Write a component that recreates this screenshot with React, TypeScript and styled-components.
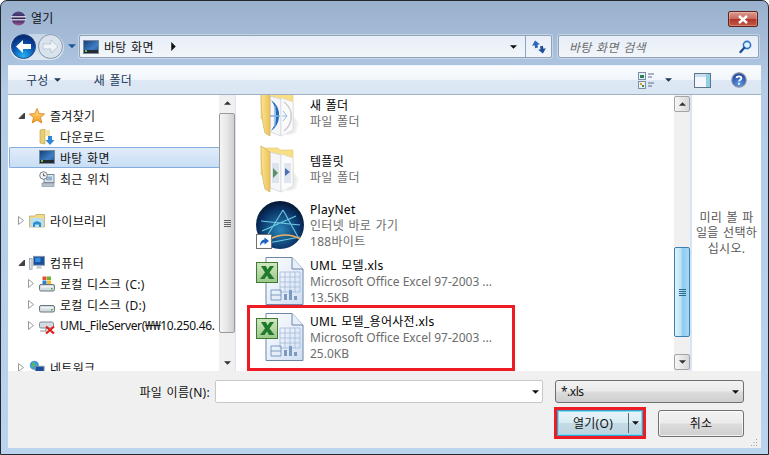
import React from "react";
import styled, { createGlobalStyle } from "styled-components";

const GlobalStyle = createGlobalStyle`
  html, body {
    margin: 0;
    padding: 0;
    background: #fff;
  }
  body {
    font-family: "Noto Sans", "Noto Sans CJK KR", sans-serif;
    font-size: 12px;
    letter-spacing: 0.3px;
    word-spacing: 1px;
    color: #000;
  }
  * {
    box-sizing: border-box;
  }
`;

const Frame = styled.div`
  width: 769px;
  height: 455px;
  border: 1px solid #23282e;
  border-radius: 7px 7px 0 0;
  padding: 0 7px 6px;
  display: flex;
  flex-direction: column;
  overflow: hidden;
  background: linear-gradient(180deg, #99b1cd 0%, #b4cce6 20%, #bad4ee 100%);
`;

const TitleBar = styled.div`
  height: 34px;
  flex: none;
  display: flex;
  align-items: center;
  padding: 0 2px 0 3px;
  gap: 5px;
`;

const TitleText = styled.span`
  flex: 1;
  font-size: 12px;
  color: #111;
`;

const CloseButton = styled.div`
  width: 30px;
  height: 16px;
  margin-right: 1px;
  margin-top: 2px;
  border: 1px solid #5f2420;
  border-radius: 2px;
  display: flex;
  align-items: center;
  justify-content: center;
  background: linear-gradient(180deg, #dc9a90 0%, #c9695c 48%, #b0352a 52%, #c25b48 100%);
  box-shadow: inset 0 0 0 1px rgba(255, 255, 255, 0.25);
`;

const AddressRow = styled.div`
  height: 23px;
  flex: none;
  display: flex;
  align-items: center;
  padding: 0 1px 0 2px;
  margin-bottom: 7px;
`;

const NavCapsule = styled.div`
  width: 54px;
  height: 26px;
  flex: none;
  border-radius: 13px;
  display: flex;
  align-items: center;
  justify-content: space-between;
  padding: 0 1px;
  background: linear-gradient(180deg, #c4d5e7, #dde8f3);
`;

const HistoryArrow = styled.div`
  width: 15px;
  flex: none;
  display: flex;
  justify-content: center;
`;

const AddressBox = styled.div`
  width: 473px;
  height: 23px;
  flex: none;
  display: flex;
  align-items: center;
  border: 1px solid #8fa3b9;
  border-radius: 2px;
  background: linear-gradient(180deg, #e7eef7, #f2f6fb);
  box-shadow: 0 0 0 1px rgba(255, 255, 255, 0.35);
`;

const AddressPath = styled.div`
  flex: 1;
  display: flex;
  align-items: center;
  padding-left: 3px;
  gap: 5px;
`;

const Crumb = styled.span`
  color: #111;
  margin-right: 12px;
`;

const AddressDrop = styled.div`
  width: 24px;
  display: flex;
  justify-content: center;
  margin-right: 0;
`;

const RefreshCell = styled.div`
  width: 26px;
  height: 100%;
  border-left: 1px solid #8fa3b9;
  display: flex;
  align-items: center;
  justify-content: center;
`;

const SearchBox = styled.div`
  width: 201px;
  height: 23px;
  margin-left: 6px;
  flex: none;
  display: flex;
  align-items: center;
  justify-content: space-between;
  padding: 0 6px 0 10px;
  border: 1px solid #8fa3b9;
  border-radius: 2px;
  background: linear-gradient(180deg, #e7eef7, #f2f6fb);
  box-shadow: 0 0 0 1px rgba(255, 255, 255, 0.35);
`;

const SearchHint = styled.span`
  font-style: italic;
  color: #6d6d6d;
`;

const Toolbar = styled.div`
  height: 30px;
  flex: none;
  display: flex;
  align-items: center;
  padding: 0 14px 0 18px;
  color: #1e395b;
  border-top: 1px solid #eef4fb;
  border-bottom: 1px solid #a0afc3;
  background: linear-gradient(180deg, #fbfdfe 0%, #f1f6fb 48%, #dde8f4 52%, #dbe6f3 100%);
`;

const ToolLabel = styled.span<{ $gap: number }>`
  margin-right: ${(p) => p.$gap}px;
`;

const ToolArrow = styled.div<{ $gap: number }>`
  display: flex;
  margin-right: ${(p) => p.$gap}px;
`;

const ToolSpring = styled.div`
  flex: 1;
`;

const ToolIcon = styled.div<{ $gap: number }>`
  display: flex;
  margin-right: ${(p) => p.$gap}px;
`;

const Content = styled.div`
  height: 276px;
  flex: none;
  display: flex;
  background: #fff;
  overflow: hidden;
`;

const NavPane = styled.div`
  width: 228px;
  flex: none;
  display: flex;
  border-right: 1px solid #d6e5f5;
`;

const NavList = styled.div`
  flex: 1;
  min-width: 0;
  padding: 10px 0 0 1px;
  overflow: hidden;
`;

const NavRow = styled.div<{ $selected?: boolean }>`
  height: 21px;
  display: flex;
  align-items: center;
  position: relative;
  white-space: nowrap;
  overflow: hidden;
  border: 1px solid ${(p) => (p.$selected ? "#84acdd" : "transparent")};
  border-right: none;
  border-radius: 2px 0 0 2px;
  background: ${(p) =>
    p.$selected ? "linear-gradient(180deg, #e0ecfa, #c9def5)" : "transparent"};
`;

const Expander = styled.div<{ $level: number }>`
  width: 9px;
  height: 9px;
  flex: none;
  display: flex;
  margin-left: ${(p) => (p.$level === 0 ? 7 : 17)}px;
  margin-right: 3px;
`;

const NavIcon = styled.div`
  width: 16px;
  height: 16px;
  flex: none;
  display: flex;
  margin-right: 5px;
`;

const NavText = styled.span<{ $tight?: boolean }>`
  color: #111;
  letter-spacing: ${(p) => (p.$tight ? "-0.35px" : "inherit")};
`;

const ScrollBar = styled.div<{ $pad: number }>`
  width: 16px;
  flex: none;
  display: flex;
  flex-direction: column;
  padding: ${(p) => p.$pad}px 0 ${(p) => p.$pad}px;
  background: #f0f0f0;
`;

const ScrollButton = styled.div<{ $plain?: boolean }>`
  height: 16px;
  flex: none;
  display: flex;
  align-items: center;
  justify-content: center;
  border: ${(p) => (p.$plain ? "none" : "1px solid #a4a4a4")};
  border-radius: 2px;
  background: ${(p) => (p.$plain ? "transparent" : "linear-gradient(90deg, #f6f6f6, #d8d8d8)")};
`;

const ScrollTrack = styled.div`
  flex: 1;
  position: relative;
`;

const ScrollThumb = styled.div<{ $top: number; $size: number; $active?: boolean }>`
  margin-top: ${(p) => p.$top}px;
  height: ${(p) => p.$size}px;
  display: flex;
  flex-direction: column;
  align-items: center;
  justify-content: center;
  gap: 1px;
  border: 1px solid ${(p) => (p.$active ? "#3c7fb1" : "#9a9a9a")};
  border-radius: 2px;
  background: ${(p) =>
    p.$active
      ? "linear-gradient(90deg, #e3f4fc 0%, #b6e0f6 45%, #8ccbef 55%, #a8d9f2 100%)"
      : "linear-gradient(90deg, #f5f5f5 0%, #e6e6e6 50%, #cfcfcf 100%)"};
`;

const GripLine = styled.div<{ $active?: boolean }>`
  width: 7px;
  height: 1px;
  background: ${(p) => (p.$active ? "#2c6a94" : "#666")};
`;

const FilePane = styled.div`
  flex: 1;
  min-width: 0;
  overflow: hidden;
  padding-left: 16px;
`;

const FileRow = styled.div<{ $marked?: boolean; $first?: boolean }>`
  width: 260px;
  height: 56px;
  margin-top: ${(p) => (p.$first ? -10 : 0)}px;
  padding-left: 4px;
  display: flex;
  align-items: center;
  gap: 6px;
  position: relative;
  &::after {
    content: "";
    display: ${(p) => (p.$marked ? "block" : "none")};
    position: absolute;
    left: -5px;
    right: -3px;
    top: -4px;
    bottom: -6px;
    border: 3px solid #ed1c24;
  }
`;

const FileIcon = styled.div`
  width: 48px;
  height: 48px;
  flex: none;
  display: flex;
`;

const FileText = styled.div`
  display: flex;
  flex-direction: column;
  white-space: nowrap;
  min-width: 0;
`;

const FileName = styled.div`
  line-height: 17px;
  color: #000;
`;

const FileDetail = styled.div<{ $latin?: boolean }>`
  line-height: 16px;
  color: #6d6d6d;
  letter-spacing: ${(p) => (p.$latin ? "0" : "inherit")};
  word-spacing: ${(p) => (p.$latin ? "0" : "inherit")};
`;

const PreviewPane = styled.div`
  width: 71px;
  flex: none;
  display: flex;
  align-items: center;
  justify-content: center;
  text-align: center;
  line-height: 15.5px;
  color: #575757;
  border-left: 2px solid #d6e5f5;
`;

const BottomPanel = styled.div`
  flex: 1;
  display: flex;
  flex-direction: column;
  padding: 9px 17px 0 0;
  background: #f0f0f0;
  position: relative;
`;

const NameRow = styled.div`
  height: 23px;
  display: flex;
  align-items: center;
  justify-content: flex-end;
`;

const NameLabel = styled.span`
  margin-right: 5px;
  color: #111;
`;

const NameInput = styled.div`
  width: 328px;
  height: 23px;
  display: flex;
  align-items: center;
  justify-content: flex-end;
  padding-right: 3px;
  margin-right: 12px;
  border: 1px solid #c8c8c8;
  border-radius: 2px;
  background: #fff;
`;

const FilterCombo = styled.div`
  width: 189px;
  height: 23px;
  display: flex;
  align-items: center;
  justify-content: space-between;
  padding: 0 4px 0 5px;
  border: 1px solid #707070;
  border-radius: 3px;
  background: linear-gradient(180deg, #f2f2f2 0%, #ebebeb 48%, #dcdcdc 52%, #cfcfcf 100%);
`;

const FilterText = styled.span`
  letter-spacing: -0.5px;
  color: #111;
`;

const ButtonRow = styled.div`
  display: flex;
  align-items: center;
  justify-content: flex-end;
  margin-top: 4px;
`;

const RedMark = styled.div`
  width: 92px;
  height: 32px;
  margin-right: 12px;
  border: 3px solid #ed1c24;
`;

const PrimaryButton = styled.div`
  height: 100%;
  display: flex;
  align-items: stretch;
  border: 1px solid #3ba0cc;
  background: linear-gradient(180deg, #e8f4f9 0%, #d9ecf4 48%, #c4dbe6 52%, #bdd3de 100%);
  box-shadow: inset 0 0 0 1px #7fdcef;
`;

const PrimaryLabel = styled.div`
  flex: 1;
  display: flex;
  align-items: center;
  justify-content: center;
  color: #111;
`;

const SplitArrow = styled.div`
  width: 14px;
  display: flex;
  align-items: center;
  justify-content: center;
  border-left: 1px solid #5a6a72;
  margin: 2px 0;
`;

const CancelButton = styled.div`
  width: 86px;
  height: 27px;
  display: flex;
  align-items: center;
  justify-content: center;
  border: 1px solid #707070;
  border-radius: 3px;
  color: #111;
  background: linear-gradient(180deg, #f2f2f2 0%, #ebebeb 48%, #dcdcdc 52%, #cfcfcf 100%);
  box-shadow: inset 0 0 0 1px rgba(255, 255, 255, 0.7);
`;

const ResizeGrip = styled.svg`
  position: absolute;
  right: 3px;
  bottom: 1px;
`;

/* small drawings */

const Caret = ({ dir = "down", size = 7, color = "#111" }: { dir?: "down" | "up" | "right"; size?: number; color?: string }) => {
  const pts =
    dir === "down" ? "0,0 8,0 4,4" : dir === "up" ? "0,4 8,4 4,0" : "0,0 4,4 0,8";
  const box = dir === "right" ? "0 0 4 8" : "0 0 8 4";
  return (
    <svg width={dir === "right" ? size / 2 + 1 : size} height={dir === "right" ? size + 1 : size / 2 + 0.5} viewBox={box}>
      <polygon points={pts} fill={color} />
    </svg>
  );
};

const OpenTri = () => (
  <svg width="9" height="9" viewBox="0 0 9 9">
    <polygon points="1.5,0.5 6.5,4.5 1.5,8.5" fill="#fff" stroke="#9a9a9a" />
  </svg>
);

const ExpandedTri = () => (
  <svg width="9" height="9" viewBox="0 0 9 9">
    <polygon points="7.5,2 7.5,7.5 2,7.5" fill="#404040" stroke="#404040" />
  </svg>
);

const EclipseLogo = () => (
  <svg width="15" height="15" viewBox="0 0 15 15">
    <defs>
      <linearGradient id="ecl" x1="0" y1="0" x2="0" y2="1">
        <stop offset="0" stopColor="#5a4a86" />
        <stop offset="0.55" stopColor="#2c2255" />
        <stop offset="1" stopColor="#a05a9a" />
      </linearGradient>
    </defs>
    <circle cx="7.5" cy="7.5" r="7" fill="url(#ecl)" />
    <rect x="0" y="5.2" width="15" height="1.2" fill="#f2eef6" />
    <rect x="0" y="8.2" width="15" height="1.2" fill="#f2eef6" />
  </svg>
);

const BackButton = () => (
  <svg width="25" height="25" viewBox="0 0 25 25">
    <defs>
      <radialGradient id="bk" cx="0.5" cy="0.9" r="0.8">
        <stop offset="0" stopColor="#28b4f0" />
        <stop offset="0.55" stopColor="#0a5bb8" />
        <stop offset="1" stopColor="#062c78" />
      </radialGradient>
    </defs>
    <circle cx="12.5" cy="12.5" r="12" fill="url(#bk)" stroke="#2b4d80" />
    <path d="M5 12.5 L12 6 V10 H20 V15 H12 V19 Z" fill="#fff" />
  </svg>
);

const ForwardButton = () => (
  <svg width="25" height="25" viewBox="0 0 25 25">
    <circle cx="12.5" cy="12.5" r="12" fill="#d9e3ed" stroke="#8a97a6" />
    <path d="M20 12.5 L13 6 V10 H5 V15 H13 V19 Z" fill="#eef3f8" stroke="#a8b5c2" strokeWidth="0.6" />
  </svg>
);

const DesktopIcon = ({ w = 16 }: { w?: number }) => (
  <svg width={w} height="14" viewBox="0 0 16 14">
    <defs>
      <linearGradient id="dsk" x1="0" y1="0" x2="1" y2="1">
        <stop offset="0" stopColor="#0f3d78" />
        <stop offset="0.6" stopColor="#3f7fc4" />
        <stop offset="1" stopColor="#1c4e90" />
      </linearGradient>
    </defs>
    <rect x="0.5" y="0.5" width="15" height="13" fill="url(#dsk)" stroke="#7d8a99" />
    <rect x="1" y="10" width="14" height="3" fill="#222a33" />
    <rect x="2" y="10" width="2" height="2" fill="#6cc24a" />
  </svg>
);

const RefreshIcon = () => (
  <svg width="16" height="16" viewBox="0 0 16 16">
    <path d="M1 6 L5 1.5 L9 6 H6.5 V9 H3.5 V6 Z" fill="#2b66b8" transform="rotate(-12 5 6)" />
    <path d="M7 10 L11 14.5 L15 10 H12.5 V7 H9.5 V10 Z" fill="#1f4f99" transform="rotate(-12 11 10)" />
  </svg>
);

const MagnifierIcon = () => (
  <svg width="13" height="14" viewBox="0 0 13 14">
    <circle cx="8" cy="5" r="3.6" fill="#dff0fb" stroke="#2d75c4" strokeWidth="1.6" />
    <path d="M5.3 7.8 L1.5 12" stroke="#1b4f96" strokeWidth="2.4" strokeLinecap="round" />
  </svg>
);

const ViewsIcon = () => (
  <svg width="17" height="17" viewBox="0 0 17 17">
    <rect x="0.5" y="0.5" width="7" height="7" fill="#e6f1fa" stroke="#7a8ea6" />
    <rect x="2" y="3" width="4" height="3" fill="#2f7f56" />
    <rect x="0.5" y="9.5" width="7" height="7" fill="#e6f1fa" stroke="#7a8ea6" />
    <rect x="2" y="11" width="2" height="2" fill="#d8a420" />
    <rect x="4" y="13" width="2" height="2" fill="#3b8f3b" />
    <path d="M10 2 H16 M10 5 H14 M10 11 H16 M10 14 H14" stroke="#5a6f88" />
  </svg>
);

const PaneIcon = () => (
  <svg width="17" height="15" viewBox="0 0 17 15">
    <rect x="0.5" y="0.5" width="16" height="14" fill="#f4f8fc" stroke="#5f7590" />
    <rect x="1" y="1" width="15" height="3" fill="#c9dff0" />
    <rect x="12" y="1" width="4" height="13" fill="#8fd0e4" />
  </svg>
);

const HelpIcon = () => (
  <svg width="16" height="16" viewBox="0 0 16 16">
    <defs>
      <radialGradient id="hlp" cx="0.5" cy="0.8" r="0.8">
        <stop offset="0" stopColor="#5b9bea" />
        <stop offset="1" stopColor="#1b3f98" />
      </radialGradient>
    </defs>
    <circle cx="8" cy="8" r="7.2" fill="url(#hlp)" stroke="#8b93a0" strokeWidth="1.2" />
    <path d="M5.6 6 C5.8 3.8 10.4 3.8 10.4 6.2 C10.4 7.8 8 7.6 8 9.6" fill="none" stroke="#fff" strokeWidth="1.7" />
    <rect x="7.1" y="10.8" width="1.8" height="1.8" fill="#fff" />
  </svg>
);

const StarIcon = () => (
  <svg width="16" height="16" viewBox="0 0 16 16">
    <defs>
      <linearGradient id="star" x1="0" y1="0" x2="0" y2="1">
        <stop offset="0" stopColor="#ffe38a" />
        <stop offset="1" stopColor="#f59a1c" />
      </linearGradient>
    </defs>
    <polygon points="8,0.5 10.2,5.6 15.6,6 11.5,9.6 12.8,15 8,12.1 3.2,15 4.5,9.6 0.4,6 5.8,5.6" fill="url(#star)" stroke="#d9791a" strokeWidth="0.8" />
  </svg>
);

const DownloadIcon = () => (
  <svg width="16" height="16" viewBox="0 0 16 16">
    <path d="M1 1 L6 0 V15 L1 14 Z" fill="#e9cd72" stroke="#b89a4a" strokeWidth="0.6" />
    <path d="M6 1 H11 V7 H6 Z" fill="#f3e2a6" />
    <path d="M9 7 H13 V11 H15.5 L11 16 L6.5 11 H9 Z" fill="#2c86d8" />
  </svg>
);

const RecentIcon = () => (
  <svg width="16" height="16" viewBox="0 0 16 16">
    <rect x="5" y="3.5" width="10" height="8" fill="#dce6ef" stroke="#7c8894" />
    <rect x="7" y="5.5" width="6" height="4" fill="#8fb3cf" />
    <rect x="3" y="12" width="12" height="3.5" fill="#b9c2cb" stroke="#7c8894" strokeWidth="0.6" />
    <circle cx="4.5" cy="4.5" r="3.8" fill="#f0f0f0" stroke="#77818b" />
    <path d="M4.5 2.5 V4.7 H6.3" fill="none" stroke="#333" strokeWidth="0.8" />
  </svg>
);

const LibraryIcon = () => (
  <svg width="16" height="16" viewBox="0 0 16 16">
    <path d="M0.5 3 H6 L7 1.5 H15.5 V14 H0.5 Z" fill="#f1d98a" stroke="#bda258" strokeWidth="0.7" />
    <rect x="1.5" y="5" width="13" height="9" fill="#b8dff2" />
    <path d="M4 14 V10 Q8 6.5 12 10 V14 H10 V11.5 H6 V14 Z" fill="#2f8fce" />
  </svg>
);

const ComputerIcon = () => (
  <svg width="18" height="16" viewBox="0 0 18 16">
    <rect x="0.5" y="3" width="3" height="12" fill="#d9dee3" stroke="#808b95" strokeWidth="0.7" />
    <rect x="5" y="0.5" width="12.5" height="10" fill="#1b4f9c" stroke="#8a96a2" />
    <rect x="7" y="2" width="6" height="5" fill="#2f8fe0" />
    <path d="M9 11 H13.5 L14.5 14.5 H8 Z" fill="#c5ccd3" />
  </svg>
);

const DiskIcon = ({ flag }: { flag?: boolean }) => (
  <svg width="16" height="16" viewBox="0 0 16 16">
    <rect x="0.5" y="8.5" width="15" height="6.5" rx="1.5" fill="#d4dce2" stroke="#69747e" />
    <rect x="2" y="10" width="12" height="1.6" fill="#eef2f5" />
    <rect x="12" y="12" width="1.6" height="1.6" fill="#42b742" />
    {flag && (
      <g>
        <rect x="3.5" y="0.5" width="4" height="3.5" fill="#e2512a" />
        <rect x="8" y="0.5" width="4" height="3.5" fill="#6bb52f" />
        <rect x="3.5" y="4.5" width="4" height="3.5" fill="#2b7cd3" />
        <rect x="8" y="4.5" width="4" height="3.5" fill="#f5bd1e" />
      </g>
    )}
  </svg>
);

const DriveOfflineIcon = () => (
  <svg width="16" height="16" viewBox="0 0 16 16">
    <rect x="0.5" y="4" width="14" height="6" rx="1.5" fill="#d4dce2" stroke="#808b95" />
    <path d="M7 10 V13 H1" fill="none" stroke="#8a949d" strokeWidth="1.2" />
    <path d="M7 8.5 L15 15.5 M15 8.5 L7 15.5" stroke="#e0201a" strokeWidth="2.2" />
  </svg>
);

const NetworkIcon = () => (
  <svg width="18" height="16" viewBox="0 0 18 16">
    <circle cx="6" cy="5" r="4.6" fill="#3aa0dc" stroke="#2a6f9e" strokeWidth="0.6" />
    <path d="M3 3 L6 2 L7 5 L4 7 Z" fill="#63bb45" />
    <rect x="7" y="6" width="10" height="8" fill="#1b4f9c" stroke="#8a96a2" />
  </svg>
);

const FolderIcon = ({ accent }: { accent: boolean }) => (
  <svg width="48" height="48" viewBox="0 0 48 48">
    <defs>
      <linearGradient id="fldFlap" x1="0" y1="0" x2="1" y2="0">
        <stop offset="0" stopColor="#fae58f" />
        <stop offset="1" stopColor="#eec25a" />
      </linearGradient>
      <radialGradient id="fldShade" cx="0.3" cy="0.5" r="0.7">
        <stop offset="0" stopColor="#d8d8da" />
        <stop offset="1" stopColor="#ffffff" />
      </radialGradient>
    </defs>
    <path d="M34 24 L44 34 L40 44 L30 47 Z" fill="url(#fldShade)" />
    <path d="M5 1 L8 3 H22 L24 5 H37 V30 H5 Z" fill="#f8df86" stroke="#e2c878" strokeWidth="0.6" />
    <path d="M14 7 L25 10 V47 L14 43 Z" fill="#f4f6f9" stroke="#ccd0d6" strokeWidth="0.7" />
    <path d="M25 9 L37 13 V41 L25 47 Z" fill="#fbfbfc" stroke="#d5d8dc" strokeWidth="0.7" />
    {accent ? (
      <g>
        <path d="M15 11 A18 18 0 0 1 23 28 A18 18 0 0 1 15 42 A26 26 0 0 0 15 11 Z" fill="#2269b8" />
        <path d="M14 27 H24 M19 17 V38" stroke="#7fb3e0" strokeWidth="1.4" />
        <path d="M28 13 A18 18 0 0 1 35 30 A18 18 0 0 1 28 42" fill="none" stroke="#c9ccd2" strokeWidth="1.5" />
        <path d="M26 27 H31 M27 22 L31 27 L27 32" fill="none" stroke="#8fb8dc" strokeWidth="1" />
      </g>
    ) : (
      <g>
        <rect x="16" y="18" width="7" height="20" fill="#dde3ec" />
        <path d="M17 23 L22 28 L17 33 Z" fill="#5f8f66" />
        <rect x="28" y="18" width="7" height="20" fill="#e0e6f0" />
        <path d="M29 23 L34 27 L29 31 Z" fill="#4a6fb0" />
      </g>
    )}
    <path d="M5 1 L14 7 V47 L9 44 Q5 30 5 1 Z" fill="url(#fldFlap)" stroke="#cdb36a" strokeWidth="0.7" />
  </svg>
);

const PlayNetIcon = () => (
  <svg width="48" height="48" viewBox="0 0 48 48">
    <defs>
      <radialGradient id="pn" cx="0.5" cy="0.6" r="0.6">
        <stop offset="0" stopColor="#2a86b8" />
        <stop offset="0.7" stopColor="#0a3468" />
        <stop offset="1" stopColor="#05152e" />
      </radialGradient>
    </defs>
    <circle cx="24" cy="24" r="24" fill="url(#pn)" />
    <path d="M5 20 L44 24 M27 9 L8 40 M27 9 L42 36 M6 30 L40 15 M12 42 L44 36" stroke="#7fe0f5" strokeWidth="1.1" fill="none" opacity="0.85" />
    <path d="M14 38 Q30 30 44 38" stroke="#f0b060" strokeWidth="1.4" fill="none" />
    <rect x="0.5" y="33.5" width="15" height="14" fill="#fff" stroke="#707070" />
    <path d="M4 45 Q4 39 8.500 38.500 V36.500 L13 40 L8.500 43.500 V41.500 Q6 41.500 4 45 Z" fill="#1d62c4" />
  </svg>
);

const ExcelIcon = () => (
  <svg width="48" height="48" viewBox="0 0 48 48">
    <defs>
      <linearGradient id="xlsDoc" x1="0" y1="0" x2="1" y2="1">
        <stop offset="0" stopColor="#ffffff" />
        <stop offset="1" stopColor="#cfdff3" />
      </linearGradient>
      <linearGradient id="xlsBadge" x1="0" y1="0" x2="0" y2="1">
        <stop offset="0" stopColor="#d2e8c0" />
        <stop offset="1" stopColor="#9cc78a" />
      </linearGradient>
    </defs>
    <path d="M10 0.500 H36 L47 12 V47.500 H10 Z" fill="url(#xlsDoc)" stroke="#6f86aa" />
    <path d="M36 0.500 V12 H47" fill="#e6eef8" stroke="#6f86aa" />
    <path d="M24 15 H44 M24 20 H44 M24 25 H44 M24 30 H44 M24 35 H44 M24 15 V35 M29 15 V35 M34 15 V35 M39 15 V35 M44 15 V35" stroke="#a5bbd9" strokeWidth="0.8" fill="none" />
    <path d="M15 33 H25 V43 H15 Z M15 38 H25" fill="none" stroke="#7f9ac0" />
    <rect x="28" y="37" width="3" height="6" fill="#7f9ac0" />
    <rect x="33" y="33" width="3" height="10" fill="#7f9ac0" />
    <rect x="38" y="39" width="3" height="4" fill="#7f9ac0" />
    <rect x="0.500" y="5.500" width="21" height="20" fill="url(#xlsBadge)" stroke="#3e7a33" />
    <path d="M5 9 H10 L11.500 12.500 L14 9 H18 L13.500 15.500 L18.500 22 H13 L11 18.500 L8.500 22 H4 L9 15.500 Z" fill="#1f7a2b" />
  </svg>
);

const ScrollColumn = ({ pad, top, size, active }: { pad: number; top: number; size: number; active?: boolean }) => (
  <ScrollBar $pad={pad}>
    <ScrollButton $plain={!active}>
      <Caret dir="up" color="#333" />
    </ScrollButton>
    <ScrollTrack>
      <ScrollThumb $top={top} $size={size} $active={active}>
        <GripLine $active={active} />
        <GripLine $active={active} />
        <GripLine $active={active} />
        <GripLine $active={active} />
      </ScrollThumb>
    </ScrollTrack>
    <ScrollButton $plain={!active}>
      <Caret dir="down" color="#333" />
    </ScrollButton>
  </ScrollBar>
);

type NavEntry = {
  label?: string;
  icon?: React.ReactNode;
  level?: number;
  tree?: "open" | "closed" | "none";
  selected?: boolean;
  tight?: boolean;
};

const navEntries: NavEntry[] = [
  { label: "즐겨찾기", icon: <StarIcon />, tree: "open" },
  { label: "다운로드", icon: <DownloadIcon />, level: 1, tree: "none" },
  { label: "바탕 화면", icon: <DesktopIcon />, level: 1, tree: "none", selected: true },
  { label: "최근 위치", icon: <RecentIcon />, level: 1, tree: "none" },
  {},
  { label: "라이브러리", icon: <LibraryIcon />, tree: "closed" },
  {},
  { label: "컴퓨터", icon: <ComputerIcon />, tree: "open" },
  { label: "로컬 디스크 (C:)", icon: <DiskIcon flag />, level: 1, tree: "closed" },
  { label: "로컬 디스크 (D:)", icon: <DiskIcon />, level: 1, tree: "closed" },
  { label: "UML_FileServer(₩₩10.250.46.", icon: <DriveOfflineIcon />, level: 1, tree: "closed", tight: true },
  {},
  { label: "네트워크", icon: <NetworkIcon />, tree: "closed" },
];

type FileEntry = {
  name: string;
  lines: string[];
  icon: React.ReactNode;
  marked?: boolean;
};

const EXCEL_TYPE = "Microsoft Office Excel 97-2003 ...";

const files: FileEntry[] = [
  { name: "새 폴더", lines: ["파일 폴더"], icon: <FolderIcon accent /> },
  { name: "템플릿", lines: ["파일 폴더"], icon: <FolderIcon accent={false} /> },
  { name: "PlayNet", lines: ["인터넷 바로 가기", "188바이트"], icon: <PlayNetIcon /> },
  { name: "UML 모델.xls", lines: [EXCEL_TYPE, "13.5KB"], icon: <ExcelIcon /> },
  { name: "UML 모델_용어사전.xls", lines: [EXCEL_TYPE, "25.0KB"], icon: <ExcelIcon />, marked: true },
];

export default function App() {
  return (
    <>
      <GlobalStyle />
      <Frame>
        <TitleBar>
          <EclipseLogo />
          <TitleText>열기</TitleText>
          <CloseButton>
            <svg width="12" height="9" viewBox="0 0 12 9">
              <path d="M2 1 L10 8 M10 1 L2 8" stroke="#fff" strokeWidth="2.4" />
            </svg>
          </CloseButton>
        </TitleBar>

        <AddressRow>
          <NavCapsule>
            <BackButton />
            <ForwardButton />
          </NavCapsule>
          <HistoryArrow>
            <Caret color="#1c5a96" size={8} />
          </HistoryArrow>
          <AddressBox>
            <AddressPath>
              <DesktopIcon />
              <Crumb>바탕 화면</Crumb>
              <Caret dir="right" size={8} color="#111" />
            </AddressPath>
            <AddressDrop>
              <Caret color="#111" />
            </AddressDrop>
            <RefreshCell>
              <RefreshIcon />
            </RefreshCell>
          </AddressBox>
          <SearchBox>
            <SearchHint>바탕 화면 검색</SearchHint>
            <MagnifierIcon />
          </SearchBox>
        </AddressRow>

        <Toolbar>
          <ToolLabel $gap={5}>구성</ToolLabel>
          <ToolArrow $gap={33}>
            <Caret color="#1e395b" />
          </ToolArrow>
          <ToolLabel $gap={0}>새 폴더</ToolLabel>
          <ToolSpring />
          <ToolIcon $gap={10}>
            <ViewsIcon />
          </ToolIcon>
          <ToolArrow $gap={22}>
            <Caret color="#1e395b" />
          </ToolArrow>
          <ToolIcon $gap={20}>
            <PaneIcon />
          </ToolIcon>
          <ToolIcon $gap={0}>
            <HelpIcon />
          </ToolIcon>
        </Toolbar>

        <Content>
          <NavPane>
            <NavList>
              {navEntries.map((entry, i) =>
                entry.label ? (
                  <NavRow key={i} $selected={entry.selected}>
                    <Expander $level={entry.level ?? 0}>
                      {entry.tree === "open" && <ExpandedTri />}
                      {entry.tree === "closed" && <OpenTri />}
                    </Expander>
                    <NavIcon>{entry.icon}</NavIcon>
                    <NavText $tight={entry.tight}>{entry.label}</NavText>
                  </NavRow>
                ) : (
                  <NavRow key={i} />
                )
              )}
            </NavList>
            <ScrollColumn pad={0} top={2} size={220} />
          </NavPane>

          <FilePane>
            {files.map((file, i) => (
              <FileRow key={file.name} $first={i === 0} $marked={file.marked}>
                <FileIcon>{file.icon}</FileIcon>
                <FileText>
                  <FileName>{file.name}</FileName>
                  {file.lines.map((line) => (
                    <FileDetail key={line} $latin={/^[\x00-\x7f]+$/.test(line)}>
                      {line}
                    </FileDetail>
                  ))}
                </FileText>
              </FileRow>
            ))}
          </FilePane>
          <ScrollColumn pad={1} top={135} size={90} active />

          <PreviewPane>
            미리 볼 파
            <br />
            일을 선택하
            <br />
            십시오.
          </PreviewPane>
        </Content>

        <BottomPanel>
          <NameRow>
            <NameLabel>파일 이름(N):</NameLabel>
            <NameInput>
              <Caret color="#111" />
            </NameInput>
            <FilterCombo>
              <FilterText>*.xls</FilterText>
              <Caret color="#111" />
            </FilterCombo>
          </NameRow>
          <ButtonRow>
            <RedMark>
              <PrimaryButton>
                <PrimaryLabel>열기(O)</PrimaryLabel>
                <SplitArrow>
                  <Caret color="#111" />
                </SplitArrow>
              </PrimaryButton>
            </RedMark>
            <CancelButton>취소</CancelButton>
          </ButtonRow>
          <ResizeGrip width="9" height="9" viewBox="0 0 9 9">
            <path d="M7 1h1v1H7zM4.500 4h1v1h-1zM7 4h1v1H7zM2 7h1v1H2zM4.500 7h1v1h-1zM7 7h1v1H7z" fill="#a0a0a0" />
          </ResizeGrip>
        </BottomPanel>
      </Frame>
    </>
  );
}
